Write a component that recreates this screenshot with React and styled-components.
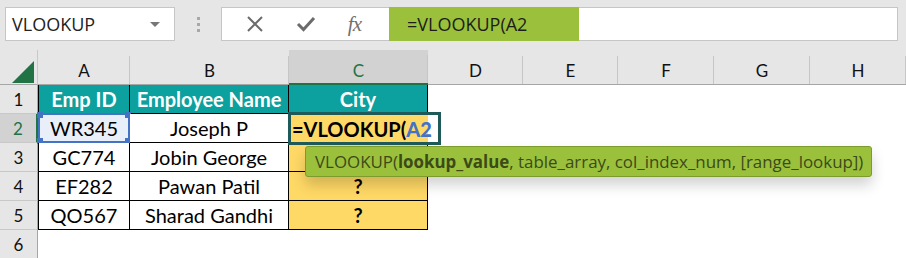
import React from "react";
import styled, { createGlobalStyle } from "styled-components";

const Global = createGlobalStyle`
  html, body { margin: 0; padding: 0; background: #fff; }
  body { width: 906px; height: 258px; overflow: hidden; }
`;

const Page = styled.div`
  width: 906px;
  height: 258px;
  position: relative;
  overflow: hidden;
  background: #fff;
`;

const Toolbar = styled.div`
  height: 50px;
  background: #e6e6e6;
  display: flex;
  align-items: flex-start;
  padding: 7px 8px 0 5px;
  box-sizing: border-box;
`;

const NameBox = styled.div`
  width: 170px;
  height: 34px;
  box-sizing: border-box;
  background: #fff;
  border: 1px solid #c6c6c6;
  display: flex;
  align-items: center;
  justify-content: space-between;
  padding: 0 14px 0 6px;
  font-family: "Open Sans", sans-serif;
  font-size: 18px;
  color: #222;
`;

const Caret = styled.span`
  width: 0;
  height: 0;
  border-left: 5px solid transparent;
  border-right: 5px solid transparent;
  border-top: 5px solid #777;
`;

const Grip = styled.div`
  width: 46px;
  height: 34px;
  display: flex;
  flex-direction: column;
  align-items: center;
  justify-content: center;
  gap: 3px;
  span {
    width: 3px;
    height: 3px;
    background: #a8a8a8;
  }
`;

const FormulaBox = styled.div`
  flex: 1;
  height: 34px;
  box-sizing: border-box;
  background: #fff;
  border: 1px solid #c6c6c6;
  display: flex;
`;

const Buttons = styled.div`
  width: 167px;
  display: flex;
  align-items: center;
  justify-content: space-around;
  padding: 0 12px 0 8px;
  box-sizing: border-box;
`;

const Fx = styled.span`
  font-family: "Liberation Serif", serif;
  font-style: italic;
  font-size: 21px;
  color: #707070;
  letter-spacing: -1px;
`;

const FormulaText = styled.div`
  width: 190px;
  background: #9bc13c;
  margin: -1px 0;
  display: flex;
  align-items: center;
  padding-left: 18px;
  box-sizing: border-box;
  font-family: "Open Sans", sans-serif;
  font-size: 18px;
  color: #1c1c1c;
`;

const Sheet = styled.div`
  display: grid;
  grid-template-columns: 38px 92px 159px 139px 95px 95px 96px 96px 96px;
  grid-template-rows: 35px repeat(6, 29px);
  font-family: Lato, "Open Sans", sans-serif;
`;

const Corner = styled.div`
  background: #e6e6e6;
  border-bottom: 1px solid #a6a6a6;
  border-right: 1px solid #c8c8c8;
  position: relative;
  box-sizing: border-box;
  svg { position: absolute; left: 12px; top: 11px; }
`;

const ColHead = styled.div`
  background: ${(p) => (p.$active ? "#d2d2d2" : "#e6e6e6")};
  border-bottom: ${(p) => (p.$active ? "2px solid #217346" : "1px solid #a6a6a6")};
  box-sizing: border-box;
  position: relative;
  display: flex;
  align-items: flex-end;
  justify-content: center;
  padding-bottom: ${(p) => (p.$active ? "2px" : "3px")};
  font-size: 17px;
  color: ${(p) => (p.$active ? "#217346" : "#111")};
  &::after {
    content: "";
    position: absolute;
    right: 0;
    bottom: 0;
    height: 28px;
    width: 1px;
    background: #c6c6c6;
  }
`;

const RowHead = styled.div`
  background: ${(p) => (p.$active ? "#d2d2d2" : "#e6e6e6")};
  border-right: ${(p) => (p.$active ? "2px solid #217346" : "1px solid #a6a6a6")};
  border-bottom: 1px solid #c8c8c8;
  box-sizing: border-box;
  display: flex;
  align-items: center;
  justify-content: center;
  font-size: 17px;
  color: ${(p) => (p.$active ? "#217346" : "#111")};
`;

const Cell = styled.div`
  box-sizing: border-box;
  display: flex;
  align-items: center;
  justify-content: center;
  font-size: 20px;
  white-space: nowrap;
  color: #000;
  font-weight: ${(p) => (p.$bold ? 700 : 400)};
  background: ${(p) =>
    p.$kind === "head" ? "#0ca19e" : p.$kind === "yellow" ? "#ffd966" : p.$kind === "copy" ? "#e9eff8" : "#fff"};
  ${(p) => p.$kind === "head" && "color: #fff;"}
  ${(p) =>
    p.$table &&
    `border-right: 1px solid #000; border-bottom: 1px solid #000;`}
  ${(p) => p.$first && `border-left: 1px solid #000;`}
  position: relative;
`;

const CopyFrame = styled.div`
  position: absolute;
  inset: -1px -1px -1px -1px;
  border: 2px solid #4472c4;
  pointer-events: none;
  i {
    position: absolute;
    width: 6px;
    height: 6px;
    background: #4472c4;
  }
`;

const EditBox = styled.div`
  position: absolute;
  left: 288px;
  top: 112px;
  width: 153px;
  height: 33px;
  box-sizing: border-box;
  border: 3px solid #1e5a5a;
  background: linear-gradient(to right, #ffd966 137px, #fff 137px);
  display: flex;
  align-items: center;
  padding-left: 1px;
  font-family: Lato, sans-serif;
  font-weight: 700;
  font-size: 20px;
  color: #000;
  white-space: nowrap;
  b { color: #4472c4; }
`;

const Tip = styled.div`
  position: absolute;
  left: 305px;
  top: 146px;
  width: 567px;
  height: 31px;
  box-sizing: border-box;
  background: #9bc13c;
  border: 1px solid #7b9b2c;
  border-radius: 3px;
  box-shadow: 0 8px 14px rgba(0, 0, 0, 0.18);
  display: flex;
  align-items: center;
  padding-left: 9px;
  font-family: "Open Sans", sans-serif;
  font-size: 16.9px;
  color: #3c4a18;
  white-space: nowrap;
  b { font-weight: 700; }
`;

const cols = ["A", "B", "C", "D", "E", "F", "G", "H"];
const data = [
  ["WR345", "Joseph P", ""],
  ["GC774", "Jobin George", ""],
  ["EF282", "Pawan Patil", "?"],
  ["QO567", "Sharad Gandhi", "?"],
];

export default function App() {
  const rows = [];
  rows.push(<RowHead key="r1">1</RowHead>);
  rows.push(<Cell key="1a" $kind="head" $bold $table $first>Emp ID</Cell>);
  rows.push(<Cell key="1b" $kind="head" $bold $table>Employee Name</Cell>);
  rows.push(<Cell key="1c" $kind="head" $bold $table>City</Cell>);
  for (let i = 0; i < 5; i++) rows.push(<Cell key={"1e" + i} />);
  data.forEach((d, idx) => {
    const r = idx + 2;
    rows.push(<RowHead key={"r" + r} $active={r === 2}>{r}</RowHead>);
    rows.push(
      <Cell key={r + "a"} $table $first $kind={r === 2 ? "copy" : undefined}>
        {d[0]}
        {r === 2 && (
          <CopyFrame>
            <i style={{ left: -3, top: -3 }} />
            <i style={{ right: -3, top: -3 }} />
            <i style={{ left: -3, bottom: -3 }} />
            <i style={{ right: -3, bottom: -3 }} />
          </CopyFrame>
        )}
      </Cell>
    );
    rows.push(<Cell key={r + "b"} $table>{d[1]}</Cell>);
    rows.push(<Cell key={r + "c"} $table $bold $kind="yellow">{d[2]}</Cell>);
    for (let i = 0; i < 5; i++) rows.push(<Cell key={r + "e" + i} />);
  });
  rows.push(<RowHead key="r6">6</RowHead>);
  for (let i = 0; i < 8; i++) rows.push(<Cell key={"6e" + i} />);

  return (
    <Page>
      <Global />
      <Toolbar>
        <NameBox>
          VLOOKUP
          <Caret />
        </NameBox>
        <Grip>
          <span />
          <span />
          <span />
        </Grip>
        <FormulaBox>
          <Buttons>
            <svg width="18" height="18" viewBox="0 0 18 18">
              <path d="M2 2 L16 16 M16 2 L2 16" stroke="#6b6b6b" strokeWidth="2" fill="none" />
            </svg>
            <svg width="20" height="16" viewBox="0 0 20 16">
              <path d="M2 8 L7.5 13.5 L18 2" stroke="#6b6b6b" strokeWidth="3" fill="none" />
            </svg>
            <Fx>fx</Fx>
          </Buttons>
          <FormulaText>=VLOOKUP(A2</FormulaText>
        </FormulaBox>
      </Toolbar>
      <Sheet>
        <Corner>
          <svg width="22" height="22" viewBox="0 0 22 22">
            <path d="M22 0 L22 22 L0 22 Z" fill="#217346" />
          </svg>
        </Corner>
        {cols.map((c) => (
          <ColHead key={c} $active={c === "C"}>{c}</ColHead>
        ))}
        {rows}
      </Sheet>
      <EditBox>
        =VLOOKUP(<b>A2</b>
      </EditBox>
      <Tip>
        VLOOKUP(<b>lookup_value</b>, table_array, col_index_num, [range_lookup])
      </Tip>
    </Page>
  );
}
